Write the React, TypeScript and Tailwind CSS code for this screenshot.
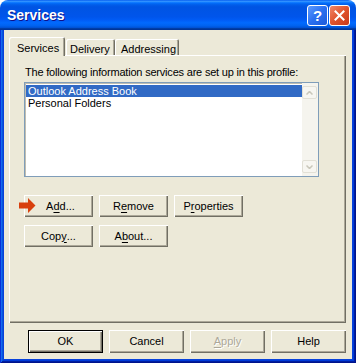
import React from "react";

const FONT = "font-['Liberation_Sans',Arial,sans-serif]";

const bevel =
  "shadow-[inset_1px_1px_0_#ffffff,inset_-1px_-1px_0_#716f64,inset_-2px_-2px_0_#aca899]";

function Btn({
  children,
  w,
  h = "h-[22px]",
  isDefault,
  disabled,
}: {
  children: React.ReactNode;
  w: string;
  h?: string;
  isDefault?: boolean;
  disabled?: boolean;
}) {
  return (
    <button
      className={`${w} ${h} flex items-center justify-center bg-[#ece9d8] text-[11px] leading-none ${bevel} ${
        isDefault ? "outline outline-1 outline-black -outline-offset-1 shadow-[inset_2px_2px_0_#ffffff,inset_-2px_-2px_0_#716f64,inset_-3px_-3px_0_#aca899]" : ""
      } ${disabled ? "text-[#aca899] [text-shadow:1px_1px_0_#ffffff]" : "text-black"}`}
    >
      {children}
    </button>
  );
}

function U({ children }: { children: React.ReactNode }) {
  return <span className="underline underline-offset-[2px]">{children}</span>;
}

export default function App() {
  return (
    <div className={`w-[356px] h-[363px] bg-white ${FONT}`}>
      <div className="w-full h-full flex flex-col rounded-t-[8px] overflow-hidden">
        {/* title bar */}
        <div className="h-[30px] shrink-0 flex items-center pl-[7px] pr-[6px] bg-[linear-gradient(180deg,#0058ee_0%,#3593ff_4%,#288eff_6%,#127dff_8%,#036ffc_10%,#0262ee_14%,#0057e5_20%,#0054e3_24%,#0055eb_56%,#005bf5_66%,#026afe_76%,#0062ef_86%,#0052d6_92%,#0040ab_94%,#003092_100%)]">
          <span className="flex-1 text-white font-bold text-[14px] [text-shadow:1px_1px_0_#0f1089]">
            Services
          </span>
          <div className="flex gap-[1px] mt-[1px]">
            <div className="w-[21px] h-[21px] rounded-[3px] border border-white bg-[linear-gradient(135deg,#5d9bff_0%,#2a6ff0_50%,#1c5ad9_100%)] flex items-center justify-center text-white font-bold text-[15px] leading-none">
              ?
            </div>
            <div className="w-[21px] h-[21px] rounded-[3px] border border-white bg-[linear-gradient(135deg,#f0876a_0%,#e0532c_50%,#c8391a_100%)] flex items-center justify-center">
              <svg width="11" height="11" viewBox="0 0 11 11">
                <path d="M1.5 1.5 L9.5 9.5 M9.5 1.5 L1.5 9.5" stroke="#fff" strokeWidth="2" strokeLinecap="square" />
              </svg>
            </div>
          </div>
        </div>

        {/* frame */}
        <div className="flex-1 flex flex-col bg-[#0842db] px-[4px] pb-[4px] shadow-[inset_1px_0_0_#0831d9,inset_-1px_-1px_0_#00138c,inset_2px_0_0_#166aee,inset_-2px_-2px_0_#001ea0,inset_3px_0_0_#0855dd,inset_-3px_-3px_0_#003bda]">
          <div className="flex-1 bg-[#ece9d8] flex flex-col pt-[7px] pl-[5px]">
            {/* tabs */}
            <div className="flex items-end h-[19px] relative z-10">
              <div className="w-[56px] h-[19px] bg-[#ece9d8] rounded-t-[2px] shadow-[inset_1px_1px_0_#ffffff,inset_-1px_0_0_#716f64,inset_-2px_0_0_#aca899] text-[11px] pl-[8px] pt-[3px] text-black">
                Services
              </div>
              <div className="w-[49px] h-[16px] ml-[1px] mb-[1px] rounded-t-[2px] shadow-[inset_1px_1px_0_#ffffff,inset_-1px_0_0_#716f64,inset_-2px_0_0_#aca899] text-[11px] pl-[4px] pt-[2px] text-black">
                Delivery
              </div>
              <div className="w-[64px] h-[16px] mb-[1px] rounded-t-[2px] shadow-[inset_1px_1px_0_#ffffff,inset_-1px_0_0_#716f64,inset_-2px_0_0_#aca899] text-[11px] pl-[6px] pt-[2px] text-black">
                Addressing
              </div>
            </div>

            {/* panel */}
            <div className="w-[337px] h-[268px] -mt-[1px] shadow-[inset_1px_1px_0_#ffffff,inset_-1px_-1px_0_#716f64,inset_-2px_-2px_0_#aca899] pl-[15px] pt-[11px]">
              <div className="text-[11px] leading-[13px] text-black ml-[1px] whitespace-nowrap tracking-[-0.2px]">
                The following information services are set up in this profile:
              </div>
              <div className="mt-[3px] w-[295px] h-[95px] bg-white flex border border-[#7f9db9] shadow-[inset_1px_1px_0_#c0bdb0]">
                <div className="flex-1 pt-[2px] pl-[1px]">
                  <div className="h-[12px] leading-[12px] bg-[#316ac5] text-white text-[11px] pl-[2px]">
                    Outlook Address Book
                  </div>
                  <div className="h-[12px] leading-[12px] text-black text-[11px] pl-[2px]">
                    Personal Folders
                  </div>
                </div>
                <div className="w-[16px] bg-[#f5f4ee] flex flex-col justify-between py-[3px] pr-[1px]">
                  <div className="w-[15px] h-[13px] rounded-[2px] border border-[#e2e0d6] bg-[#f7f6f1] flex items-center justify-center">
                    <svg width="7" height="4" viewBox="0 0 7 4">
                      <path d="M0.5 3.5 L3.5 0.5 L6.5 3.5" stroke="#c9c7ba" strokeWidth="1.5" fill="none" />
                    </svg>
                  </div>
                  <div className="w-[15px] h-[13px] rounded-[2px] border border-[#e2e0d6] bg-[#f7f6f1] flex items-center justify-center">
                    <svg width="7" height="4" viewBox="0 0 7 4">
                      <path d="M0.5 0.5 L3.5 3.5 L6.5 0.5" stroke="#c9c7ba" strokeWidth="1.5" fill="none" />
                    </svg>
                  </div>
                </div>
              </div>

              <div className="mt-[18px] flex flex-col gap-[8px]">
                <div className="flex gap-[6px]">
                  <div className="relative">
                    <Btn w="w-[69px]">
                      <span className="pl-[4px]">
                        A<U>d</U>d...
                      </span>
                    </Btn>
                    <svg className="absolute left-[-5px] top-[3px]" width="17" height="15" viewBox="0 0 17 15">
                      <path d="M0 4.5 H9 V0 L16.5 7.5 L9 15 V10.5 H0 Z" fill="#d8400e" />
                    </svg>
                  </div>
                  <Btn w="w-[69px]">
                    R<U>e</U>move
                  </Btn>
                  <Btn w="w-[69px]">
                    P<U>r</U>operties
                  </Btn>
                </div>
                <div className="flex gap-[6px]">
                  <Btn w="w-[69px]">
                    Cop<U>y</U>...
                  </Btn>
                  <Btn w="w-[69px]">
                    A<U>b</U>out...
                  </Btn>
                </div>
              </div>
            </div>

            {/* bottom buttons */}
            <div className="mt-[7px] pl-[19px] flex gap-[6px]">
              <Btn w="w-[75px]" h="h-[23px]" isDefault>
                OK
              </Btn>
              <Btn w="w-[75px]" h="h-[23px]">
                Cancel
              </Btn>
              <Btn w="w-[75px]" h="h-[23px]" disabled>
                <U>A</U>pply
              </Btn>
              <Btn w="w-[75px]" h="h-[23px]">
                Help
              </Btn>
            </div>
          </div>
        </div>
      </div>
    </div>
  );
}
